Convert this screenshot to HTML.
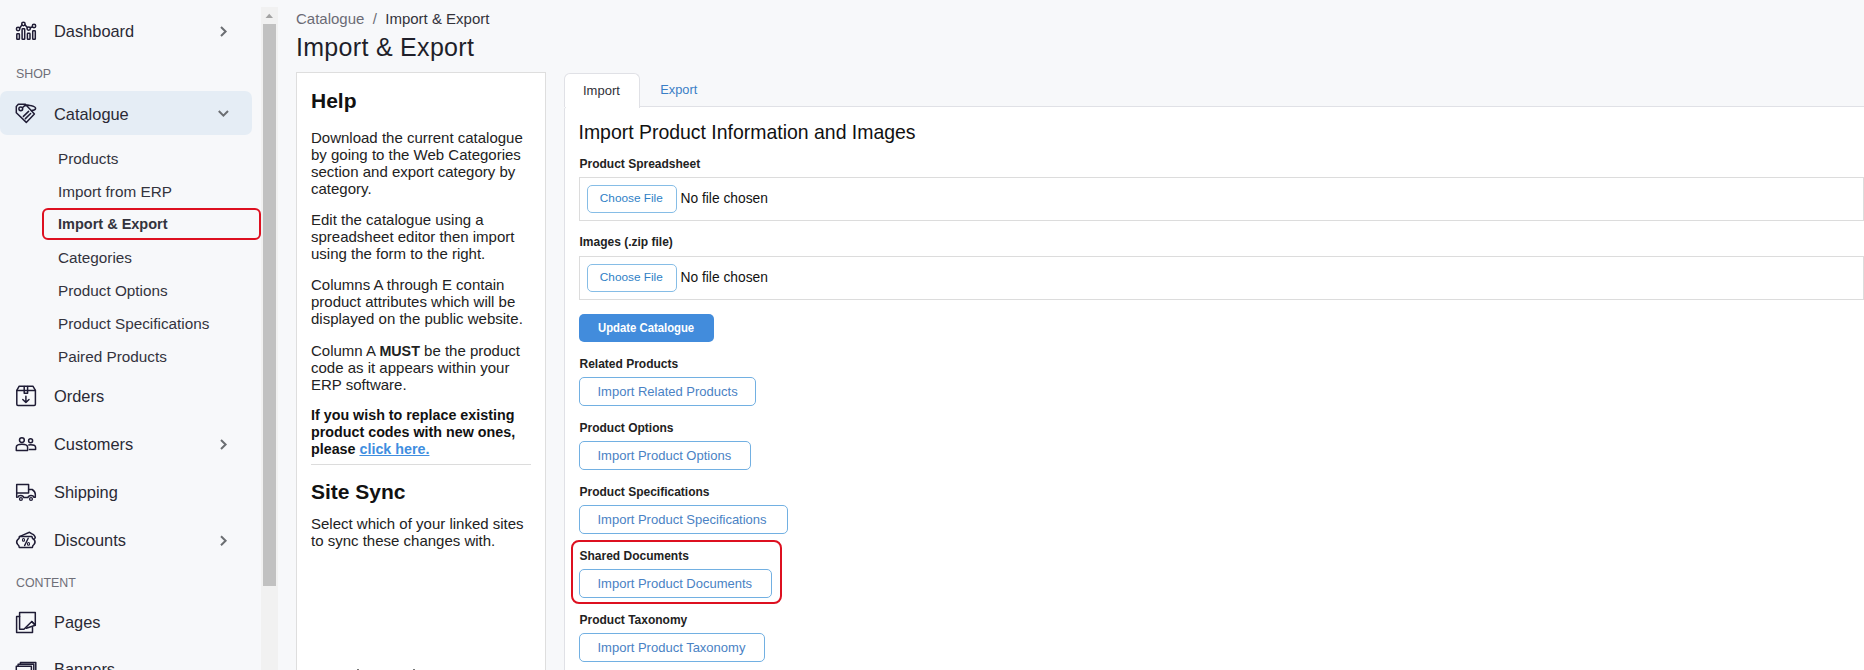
<!DOCTYPE html>
<html><head><meta charset="utf-8">
<style>
*{box-sizing:border-box;margin:0;padding:0}
html,body{width:1864px;height:670px;overflow:hidden;background:#f7f8fa;font-family:"Liberation Sans",sans-serif;color:#26262e}
.a{position:absolute;white-space:nowrap}
.nav{font-size:16.4px;color:#2a2a35}
.sub{font-size:15.3px;color:#33333d}
.sec{font-size:12.4px;color:#6f6f78}
.ico{position:absolute}
.chev{position:absolute}
#hl{position:absolute;left:0;top:91px;width:252px;height:44px;background:#e5edf5;border-radius:7px}
#redbox1{position:absolute;left:42px;top:208px;width:219px;height:32px;border:2px solid #dd1020;border-radius:6px}
#sb{position:absolute;left:261px;top:7px;width:17px;height:663px;background:#f1f1f1}
#thumb{position:absolute;left:263px;top:24px;width:13px;height:562px;background:#c1c1c1}
.card{position:absolute;background:#fff;border:1px solid #dedede}
.help{font-size:15px;line-height:17px;color:#222}
.lbl{font-size:13px;font-weight:bold;color:#1a1a1a}
.btn{position:absolute;border:1px solid #76afe0;border-radius:5px;background:#fff;color:#3a7fc8;font-size:13px;text-align:center}
.filebox{position:absolute;left:579px;width:1285px;height:44px;border:1px solid #dcdcdc;background:#fff}
</style></head><body>
<!-- sidebar -->
<div id="hl"></div>
<div id="redbox1"></div>
<div class="a nav" style="left:54px;top:22px">Dashboard</div>
<div class="a sec" style="left:16px;top:67px">SHOP</div>
<div class="a nav" style="left:54px;top:105px">Catalogue</div>
<div class="a sub" style="left:58px;top:150px">Products</div>
<div class="a sub" style="left:58px;top:183px">Import from ERP</div>
<div class="a sub" style="left:58px;top:216px;font-weight:bold;font-size:14.5px">Import &amp; Export</div>
<div class="a sub" style="left:58px;top:249px">Categories</div>
<div class="a sub" style="left:58px;top:282px">Product Options</div>
<div class="a sub" style="left:58px;top:315px">Product Specifications</div>
<div class="a sub" style="left:58px;top:348px">Paired Products</div>
<div class="a nav" style="left:54px;top:387px">Orders</div>
<div class="a nav" style="left:54px;top:435px">Customers</div>
<div class="a nav" style="left:54px;top:483px">Shipping</div>
<div class="a nav" style="left:54px;top:531px">Discounts</div>
<div class="a sec" style="left:16px;top:576px">CONTENT</div>
<div class="a nav" style="left:54px;top:613px">Pages</div>
<div class="a nav" style="left:54px;top:660px">Banners</div>
<svg style="position:absolute;left:0;top:0" width="260" height="670" viewBox="0 0 260 670" fill="none" stroke="#1f1c35" stroke-width="1.5" stroke-linecap="round" stroke-linejoin="round">
<!-- dashboard -->
<rect x="16.8" y="33.8" width="2.6" height="5.5" rx="0.6"/>
<rect x="22.1" y="28.8" width="2.6" height="10.5" rx="0.6"/>
<rect x="27.4" y="33.3" width="2.6" height="6" rx="0.6"/>
<rect x="32.7" y="30.8" width="2.6" height="8.5" rx="0.6"/>
<circle cx="18.1" cy="29" r="1.7"/><circle cx="23.4" cy="24" r="1.7"/><circle cx="28.7" cy="28.6" r="1.7"/><circle cx="34" cy="26" r="1.7"/>
<path d="M19.6 28.2L21.9 24.9M24.9 24.8L27.3 27.6M30.2 27.8L32.5 26.8"/>
<!-- catalogue tag -->
<path d="M18.3 104.3H25.4L34.4 114.1L26.3 122.4L16.3 112.8V106.5Z"/>
<circle cx="20.8" cy="108.8" r="1.9"/>
<path d="M23.4 116.4L28.6 111.4M25.4 118.6L30.6 113.5"/>
<path d="M22.5 107.6C24 105.5 27 104.6 30.5 105.6C33.5 106.3 35.8 107.4 35.6 108.6C35.4 109.6 33.5 110.3 31.7 110.5"/>
<!-- orders box -->
<path d="M16.8 390.4H35.4V404.2Q35.4 405.4 34.2 405.4H18Q16.8 405.4 16.8 404.2Z"/>
<path d="M16.8 390.4L19.2 386.2H32.9L35.4 390.4"/>
<path d="M24.2 386.4V393.3H27.6V386.4"/>
<path d="M25.9 396.2V402.4M22.8 399.5L25.9 402.5L29 399.5"/>
<!-- customers -->
<circle cx="21.9" cy="440.1" r="2.4"/>
<path d="M16.3 450.6V447.2Q16.3 444.3 21.9 444.3Q27.6 444.3 27.6 447.2V450.6Z"/>
<circle cx="30.6" cy="440.7" r="2"/>
<path d="M28.8 444.9Q29.5 444.8 30.8 444.8Q35.6 444.8 35.6 447.4V449.6H29.4"/>
<!-- shipping truck -->
<path d="M16.7 497.2V484.6H28.6V492.9H16.7"/>
<path d="M28.6 489.5H32.2Q35.3 491.5 35.3 494.3V497.3H34.4"/>
<path d="M17.8 497.2Q18.4 495.4 20.8 495.4Q23.2 495.4 23.8 497.5H27.9Q28.5 495.4 31 495.4Q33.4 495.4 34 497.3"/>
<circle cx="20.9" cy="499" r="1.45" stroke-width="1.25"/><circle cx="31" cy="499" r="1.45" stroke-width="1.25"/>
<!-- discounts -->
<path d="M19.5 536.6H31.9Q32.2 539 34.1 539.7Q36 541.9 34.1 544.3Q32.5 545.1 32.4 547.5H19.3Q19.1 545.1 17.6 544.3Q15.7 541.9 17.6 539.7Q19.3 539 19.5 536.6Z"/>
<path d="M19.5 536.6L24.5 534.4L29.5 532.3L31.5 533.6L33.5 534.6L34.6 536L35.3 537.3L34.8 538.4L34.2 539.1"/>
<ellipse cx="23.5" cy="539.9" rx="1.05" ry="1.35" stroke-width="1.1"/><ellipse cx="28.5" cy="543.9" rx="1.05" ry="1.35" stroke-width="1.1"/><path d="M24.6 545.6L28.2 538.2" stroke-width="1.4"/>
<!-- pages -->
<path d="M19.6 629.3V612.6H35.3V625.3L31.8 621.5L23.9 629.3Z"/>
<path d="M31.8 621.5L35.3 625.3L26.3 628.3"/>
<path d="M19.6 616.4H16.6V632.4H32.5V627.6"/>
<!-- banners -->
<path d="M20.4 664V662.5H35.8V680M18.1 666V664.2H33.8V680M16.3 680V666.2H31.4V680"/>
<!-- chevrons -->
<g stroke="#6b6e72" stroke-width="2" stroke-linecap="butt" stroke-linejoin="miter">
<path d="M221 27L225.6 31.5L221 36"/>
<path d="M218.8 111L223.4 115.6L228 111"/>
<path d="M221 440L225.6 444.5L221 449"/>
<path d="M221 536.3L225.6 540.8L221 545.3"/>
</g>
</svg>
<div id="sb"></div><div id="thumb"></div>
<svg style="position:absolute;left:260px;top:8px" width="20" height="14"><path d="M5.5 10H13L9.25 5.8Z" fill="#a3a3a3"/></svg>

<!-- main -->
<div class="a" style="left:296px;top:10.98px;font-size:15px;line-height:15px;color:#6b6b75">Catalogue&nbsp; /&nbsp; <span style="color:#33333b">Import &amp; Export</span></div>
<div class="a" style="left:296px;top:34.54px;font-size:25px;line-height:25px;color:#1f1f2a;letter-spacing:0.3px">Import &amp; Export</div>
<div class="card" style="left:296px;top:72px;width:250px;height:620px"></div>
<div class="a" style="left:311px;top:89.52px;font-size:21px;line-height:21px;font-weight:bold;color:#111">Help</div>
<div class="a" style="left:311px;top:129.30px;font-size:15px;line-height:17px;color:#222">Download the current catalogue<br>by going to the Web Categories<br>section and export category by<br>category.</div>
<div class="a" style="left:311px;top:211.30px;font-size:15px;line-height:17px;color:#222">Edit the catalogue using a<br>spreadsheet editor then import<br>using the form to the right.</div>
<div class="a" style="left:311px;top:276.30px;font-size:15px;line-height:17px;color:#222">Columns A through E contain<br>product attributes which will be<br>displayed on the public website.</div>
<div class="a" style="left:311px;top:341.60px;font-size:15px;line-height:17px;color:#222">Column A <b style="font-size:14.3px;line-height:0">MUST</b> be the product<br>code as it appears within your<br>ERP software.</div>
<div class="a" style="left:311px;top:407.05px;font-size:14.3px;line-height:17px;font-weight:bold;color:#111">If you wish to replace existing<br>product codes with new ones,<br>please <span style="color:#3f8ee0;text-decoration:underline">click here.</span></div>
<div style="position:absolute;left:311px;top:464px;width:220px;height:1px;background:#dcdcdc"></div>
<div class="a" style="left:311px;top:481.12px;font-size:21px;line-height:21px;font-weight:bold;color:#111">Site Sync</div>
<div class="a" style="left:311px;top:514.80px;font-size:15px;line-height:17px;color:#222">Select which of your linked sites<br>to sync these changes with.</div>
<div style="position:absolute;left:564px;top:106px;width:1310px;height:600px;background:#fff;border:1px solid #e0e1e6;border-top-left-radius:3px"></div>
<div style="position:absolute;left:564px;top:73px;width:76px;height:35px;background:#fff;border:1px solid #e0e1e6;border-bottom:none;border-radius:6px 6px 0 0"></div>
<div style="position:absolute;left:564px;top:107px;width:1px;height:1px;background:#f4f5f7"></div><div style="position:absolute;left:565px;top:107px;width:1px;height:1px;background:#e6e7eb"></div>
<div class="a" style="left:583px;top:83.80px;font-size:13px;line-height:13px;color:#2f2f37">Import</div>
<div class="a" style="left:660.3px;top:83.96px;font-size:12.8px;line-height:12.8px;color:#3a7ec6">Export</div>
<div class="a" style="left:578.5px;top:122.6px;font-size:19.45px;line-height:19.45px;color:#111">Import Product Information and Images</div>
<div class="a" style="left:579.5px;top:157.54px;font-size:12px;line-height:12px;font-weight:bold;color:#222">Product Spreadsheet</div>
<div style="position:absolute;left:579px;top:177px;width:1285px;height:44px;border:1px solid #dcdcdc;background:#fff"></div>
<div style="position:absolute;box-sizing:border-box;border:1px solid #72b0e2;border-radius:5px;background:#fff;left:587px;top:185px;width:90px;height:28px;border-color:#86bde6"></div>
<div class="a" style="left:599.8px;top:192.51px;font-size:11.8px;line-height:11.8px;color:#2f7fc6">Choose File</div>
<div class="a" style="left:680.5px;top:191.82px;font-size:13.8px;line-height:13.8px;color:#111">No file chosen</div>
<div style="position:absolute;left:579px;top:256px;width:1285px;height:44px;border:1px solid #dcdcdc;background:#fff"></div>
<div style="position:absolute;box-sizing:border-box;border:1px solid #72b0e2;border-radius:5px;background:#fff;left:587px;top:264px;width:90px;height:28px;border-color:#86bde6"></div>
<div class="a" style="left:599.8px;top:271.51px;font-size:11.8px;line-height:11.8px;color:#2f7fc6">Choose File</div>
<div class="a" style="left:680.5px;top:270.82px;font-size:13.8px;line-height:13.8px;color:#111">No file chosen</div>
<div class="a" style="left:579.5px;top:236.24px;font-size:12px;line-height:12px;font-weight:bold;color:#222">Images (.zip file)</div>
<div style="position:absolute;left:579px;top:314px;width:135px;height:28px;background:#428cdc;border-radius:5px"></div>
<div class="a" style="left:597.5px;top:321.10px;font-size:13px;line-height:13px;font-weight:bold;color:#fff"><span style="display:inline-block;transform:scaleX(0.87);transform-origin:0 0">Update Catalogue</span></div>
<div class="a" style="left:579.5px;top:357.54px;font-size:12px;line-height:12px;font-weight:bold;color:#222">Related Products</div>
<div style="position:absolute;box-sizing:border-box;border:1px solid #72b0e2;border-radius:5px;background:#fff;left:579px;top:377px;width:177px;height:29px"></div>
<div class="a" style="left:597.5px;top:385.00px;font-size:13px;line-height:13px;color:#4a82c4">Import Related Products</div>
<div class="a" style="left:579.5px;top:421.54px;font-size:12px;line-height:12px;font-weight:bold;color:#222">Product Options</div>
<div style="position:absolute;box-sizing:border-box;border:1px solid #72b0e2;border-radius:5px;background:#fff;left:579px;top:441px;width:172px;height:29px"></div>
<div class="a" style="left:597.5px;top:449.00px;font-size:13px;line-height:13px;color:#4a82c4">Import Product Options</div>
<div class="a" style="left:579.5px;top:485.54px;font-size:12px;line-height:12px;font-weight:bold;color:#222">Product Specifications</div>
<div style="position:absolute;box-sizing:border-box;border:1px solid #72b0e2;border-radius:5px;background:#fff;left:579px;top:505px;width:209px;height:29px"></div>
<div class="a" style="left:597.5px;top:513.00px;font-size:13px;line-height:13px;color:#4a82c4">Import Product Specifications</div>
<div class="a" style="left:579.5px;top:549.54px;font-size:12px;line-height:12px;font-weight:bold;color:#222">Shared Documents</div>
<div style="position:absolute;box-sizing:border-box;border:1px solid #72b0e2;border-radius:5px;background:#fff;left:579px;top:569px;width:193px;height:29px"></div>
<div class="a" style="left:597.5px;top:577.00px;font-size:13px;line-height:13px;color:#4a82c4">Import Product Documents</div>
<div class="a" style="left:579.5px;top:613.54px;font-size:12px;line-height:12px;font-weight:bold;color:#222">Product Taxonomy</div>
<div style="position:absolute;box-sizing:border-box;border:1px solid #72b0e2;border-radius:5px;background:#fff;left:579px;top:633px;width:186px;height:29px"></div>
<div class="a" style="left:597.5px;top:641.00px;font-size:13px;line-height:13px;color:#4a82c4">Import Product Taxonomy</div>
<div style="position:absolute;left:571px;top:540px;width:211px;height:64px;border:2.4px solid #dd1020;border-radius:8px"></div>
<div style="position:absolute;left:357px;top:669px;width:1.5px;height:1px;background:#777"></div><div style="position:absolute;left:413px;top:669px;width:1.5px;height:1px;background:#777"></div>
</body></html>
